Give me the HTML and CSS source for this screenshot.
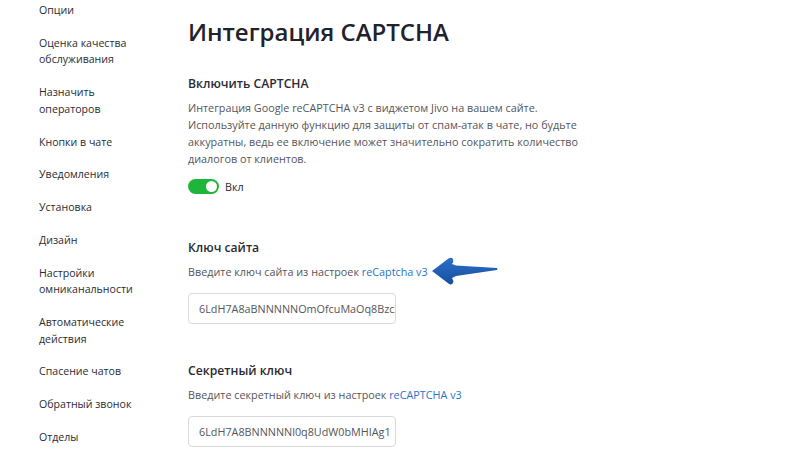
FILE: index.html
```html
<!DOCTYPE html>
<html lang="ru">
<head>
<meta charset="utf-8">
<link rel="stylesheet" href="styles.css">
</head>
<body>
<div class="page">
  <nav class="sidebar">
    <a class="nav-item">Опции</a>
    <a class="nav-item">Оценка качества<br>обслуживания</a>
    <a class="nav-item">Назначить<br>операторов</a>
    <a class="nav-item">Кнопки в чате</a>
    <a class="nav-item">Уведомления</a>
    <a class="nav-item">Установка</a>
    <a class="nav-item">Дизайн</a>
    <a class="nav-item">Настройки<br>омниканальности</a>
    <a class="nav-item">Автоматические<br>действия</a>
    <a class="nav-item">Спасение чатов</a>
    <a class="nav-item">Обратный звонок</a>
    <a class="nav-item">Отделы</a>
  </nav>
  <main class="content">
    <h1 class="title">Интеграция CAPTCHA</h1>
    <section class="section">
      <h2 class="section-title">Включить CAPTCHA</h2>
      <p class="desc">Интеграция Google reCAPTCHA v3 с виджетом Jivo на вашем сайте.<br>Используйте данную функцию для защиты от спам-атак в чате, но будьте<br>аккуратны, ведь ее включение может значительно сократить количество<br>диалогов от клиентов.</p>
      <div class="toggle-row">
        <span class="toggle"><span class="knob"></span></span>
        <span class="toggle-label">Вкл</span>
      </div>
    </section>
    <section class="section section-key">
      <h2 class="section-title">Ключ сайта</h2>
      <p class="desc">Введите ключ сайта из настроек <a class="link">reCaptcha v3</a><span class="arrow-anchor"><svg class="arrow" width="72" height="32" viewBox="0 0 72 32"><defs><linearGradient id="ag" x1="0" y1="0" x2="0" y2="1"><stop offset="0" stop-color="#2b70ca"/><stop offset="1" stop-color="#164e9e"/></linearGradient></defs><path d="M2 16 L18.5 3.5 Q21.5 1.8 23 4 Q24 6.5 22 9 L26 10.5 L67 13 Q68 14 67 15 L26 21 L22 23 Q24 25.5 23 28 Q21.5 30.5 18.5 28.5 Z" fill="url(#ag)"/></svg></span></p>
      <div class="input">6LdH7A8aBNNNNNOmOfcuMaOq8BzcXyZ</div>
    </section>
    <section class="section section-secret">
      <h2 class="section-title">Секретный ключ</h2>
      <p class="desc">Введите секретный ключ из настроек <a class="link">reCAPTCHA v3</a></p>
      <div class="input">6LdH7A8BNNNNNl0q8UdW0bMHIAg1</div>
    </section>
  </main>
</div>
</body>
</html>
```
FILE: styles.css
```css
html, body {
  margin: 0;
  padding: 0;
  background: #fff;
}
body {
  font-family: "Open Sans", "Noto Sans", sans-serif;
  color: #2b2b33;
  width: 799px;
  height: 460px;
  overflow: hidden;
}
.page {
  display: flex;
}
.sidebar {
  width: 149px;
  padding: 2px 0 0 39px;
  display: flex;
  flex-direction: column;
  gap: 16.2px;
  flex-shrink: 0;
}
.nav-item {
  font-size: 10.6px;
  line-height: 16.6px;
  color: #2b2b33;
}
.content {
  display: flex;
  flex-direction: column;
}
.title {
  margin: 14px 0 0;
  font-size: 24px;
  line-height: 36px;
  font-weight: 600;
  color: #22222a;
}
.section {
  margin-top: 24px;
}
.section-key {
  margin-top: 44px;
}
.section-secret {
  margin-top: 37px;
}
.section-title {
  margin: 0;
  font-size: 12.2px;
  line-height: 20px;
  font-weight: 600;
  color: #2b2b33;
}
.desc {
  margin: 5px 0 0;
  font-size: 10.8px;
  line-height: 17px;
  color: #55555c;
}
.link {
  color: #2a73c8;
}
.arrow-anchor {
  position: relative;
  display: inline-block;
  width: 0;
  height: 17px;
  vertical-align: top;
}
.arrow {
  position: absolute;
  left: 2px;
  top: -8px;
}
.toggle-row {
  display: flex;
  align-items: center;
  gap: 6px;
  margin-top: 12px;
}
.toggle {
  width: 31px;
  height: 15px;
  border-radius: 8px;
  background: #1fb53a;
  position: relative;
}
.knob {
  position: absolute;
  right: 2px;
  top: 2px;
  width: 11px;
  height: 11px;
  border-radius: 50%;
  background: #fff;
}
.toggle-label {
  font-size: 10.8px;
  color: #2b2b33;
}
.input {
  margin-top: 13px;
  width: 196px;
  height: 29px;
  border: 1px solid #d9d9dd;
  border-radius: 4px;
  padding: 0 0 0 10px;
  font-size: 10.8px;
  line-height: 29px;
  color: #55555c;
  white-space: nowrap;
  overflow: hidden;
}
```
